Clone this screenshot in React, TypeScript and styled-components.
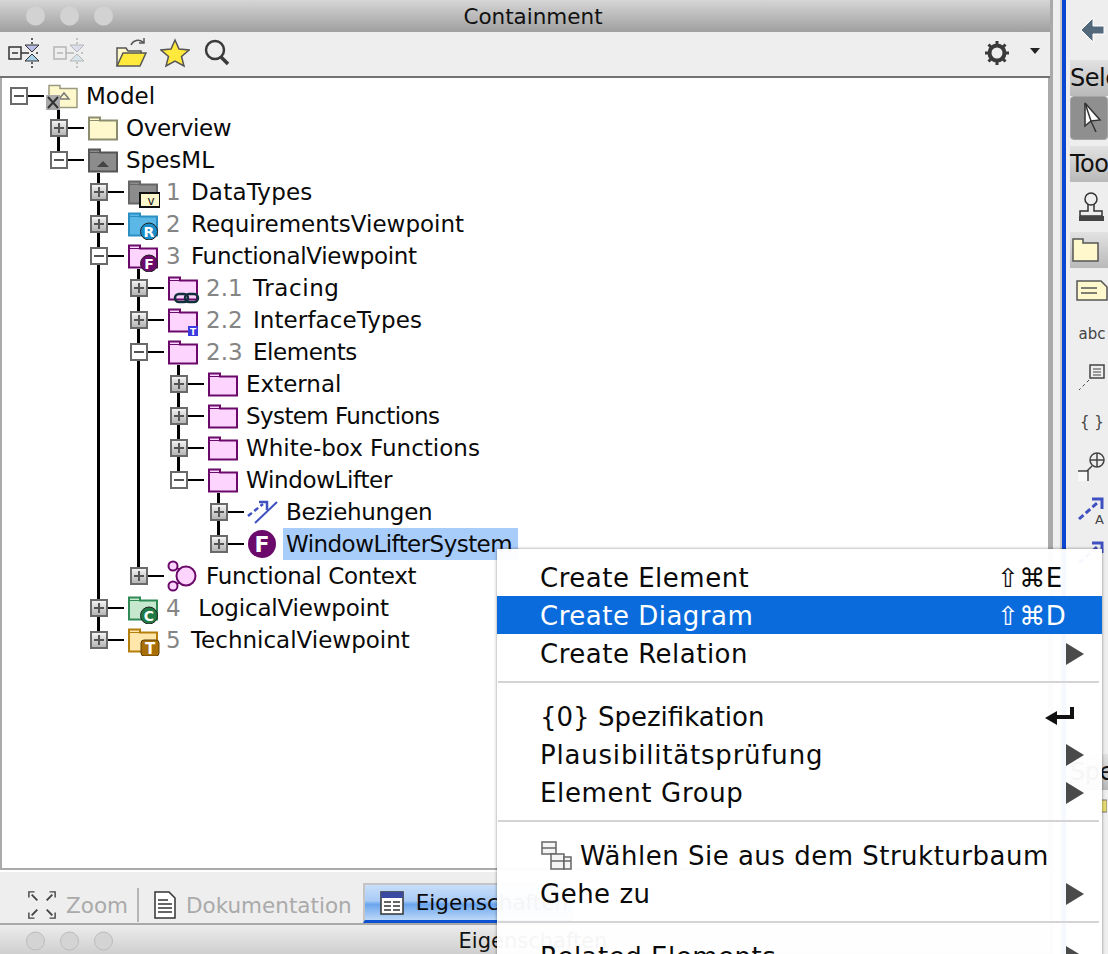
import React, { ReactNode } from 'react';
import styled, { createGlobalStyle } from 'styled-components';

const FONT = `"DejaVu Sans", "Liberation Sans", sans-serif`;

const GlobalStyle = createGlobalStyle`
  html, body {
    margin: 0;
    padding: 0;
    background: #eee;
    overflow: hidden;
  }
  body {
    font-family: ${FONT};
  }
`;

/* ---------- icons ---------- */

type FolderProps = { fill: string; stroke: string; children?: ReactNode };

function Folder({ fill, stroke, children }: FolderProps) {
  return (
    <svg width="36" height="32" viewBox="0 0 36 32">
      <path d="M5 5.5h11v3h17v19H5z" fill={fill} stroke={stroke} strokeWidth="2" />
      <path d="M5 8.5h11" stroke={stroke} strokeWidth="1" />
      {children}
    </svg>
  );
}

const purple = { fill: '#fdd4fd', stroke: '#6b0a6b' };

function Badge({ color, letter }: { color: string; letter: string }) {
  return (
    <>
      <circle cx="25" cy="23.5" r="8.5" fill={color} stroke="#222" strokeWidth="1" />
      <text x="25" y="28.5" textAnchor="middle" fontFamily={FONT} fontSize="14" fontWeight="700" fill="#fff">
        {letter}
      </text>
    </>
  );
}

const icons: Record<string, ReactNode> = {
  model: (
    <svg width="36" height="32" viewBox="0 0 36 32">
      <path d="M5 5.5h11v3h17v19H5z" fill="#fff8cc" stroke="#9a9a80" strokeWidth="1.5" />
      <path d="M15 19l5-6 5 6z" fill="none" stroke="#777" strokeWidth="1.5" />
      <rect x="2" y="15" width="14" height="15" fill="#aaa" />
      <path d="M4 17l10 11M14 17L4 28" stroke="#333" strokeWidth="2" />
    </svg>
  ),
  overview: <Folder fill="#fff8cc" stroke="#8c8c70" />,
  spesml: (
    <Folder fill="#8c8c8c" stroke="#555">
      <path d="M13 23l6-6 6 6z" fill="#444" />
    </Folder>
  ),
  datatypes: (
    <Folder fill="#8c8c8c" stroke="#666">
      <rect x="16" y="17" width="20" height="14" fill="#fff8cc" stroke="#111" strokeWidth="2" />
      <text x="27" y="29" textAnchor="middle" fontFamily={FONT} fontSize="12" fill="#111">v</text>
    </Folder>
  ),
  requirements: (
    <Folder fill="#5ab7e6" stroke="#2b8fc4">
      <Badge color="#1a8cc8" letter="R" />
    </Folder>
  ),
  functional: (
    <Folder {...purple}>
      <Badge color="#6b0a6b" letter="F" />
    </Folder>
  ),
  tracing: (
    <Folder {...purple}>
      <rect x="11" y="22" width="13" height="8" rx="4" fill="none" stroke="#12303c" strokeWidth="2.5" />
      <rect x="21" y="22" width="13" height="8" rx="4" fill="none" stroke="#12303c" strokeWidth="2.5" />
    </Folder>
  ),
  interfaces: (
    <Folder {...purple}>
      <rect x="24" y="22" width="10" height="10" fill="#3a3ae0" />
      <text x="29" y="31" textAnchor="middle" fontFamily={FONT} fontSize="9" fontWeight="700" fill="#fff">T</text>
    </Folder>
  ),
  purple: <Folder {...purple} />,
  relations: (
    <svg width="36" height="32" viewBox="0 0 36 32">
      <path d="M4 20L19 8" stroke="#3f51c0" strokeWidth="2.5" strokeDasharray="5 3" />
      <path d="M15 6h8v8" fill="none" stroke="#3f51c0" strokeWidth="2.5" />
      <path d="M11 27L33 6" stroke="#3f51c0" strokeWidth="2" />
    </svg>
  ),
  system: (
    <svg width="36" height="32" viewBox="0 0 36 32">
      <circle cx="18" cy="16" r="14" fill="#6b0a6b" />
      <text x="18" y="24" textAnchor="middle" fontFamily={FONT} fontSize="22" fontWeight="700" fill="#fff">F</text>
    </svg>
  ),
  context: (
    <svg width="36" height="32" viewBox="0 0 36 32">
      <circle cx="22" cy="16" r="9.5" fill="#fdd4fd" stroke="#6b0a6b" strokeWidth="2" />
      <circle cx="9" cy="6" r="4.5" fill="#fdd4fd" stroke="#6b0a6b" strokeWidth="2" />
      <circle cx="9" cy="26" r="4.5" fill="#fdd4fd" stroke="#6b0a6b" strokeWidth="2" />
      <path d="M13 8l3 2M13 24l3-2" stroke="#6b0a6b" strokeWidth="2" />
    </svg>
  ),
  logical: (
    <Folder fill="#c6e8cf" stroke="#2f8a56">
      <Badge color="#1f7a45" letter="C" />
    </Folder>
  ),
  technical: (
    <Folder fill="#ffe7ab" stroke="#b57f0c">
      <rect x="17" y="16" width="18" height="16" rx="3" fill="#a86f06" stroke="#5f4004" />
      <text x="26" y="30" textAnchor="middle" fontFamily={FONT} fontSize="15" fontWeight="700" fill="#fff">T</text>
    </Folder>
  ),
};

/* ---------- tree data ---------- */

type Row = {
  level: number;
  guides?: number[];
  toggle: 'plus' | 'minus';
  line?: 'up' | 'through';
  open?: boolean;
  icon: string;
  num?: string;
  label: string;
  track?: number;
  selected?: boolean;
};

const rows: Row[] = [
  { level: 0, toggle: 'minus', open: true, icon: 'model', label: 'Model' },
  { level: 1, toggle: 'plus', line: 'through', icon: 'overview', label: 'Overview', track: -0.4 },
  { level: 1, toggle: 'minus', line: 'up', open: true, icon: 'spesml', label: 'SpesML' },
  { level: 2, toggle: 'plus', line: 'through', icon: 'datatypes', num: '1 ', label: 'DataTypes', track: 0.2 },
  { level: 2, toggle: 'plus', line: 'through', icon: 'requirements', num: '2 ', label: 'RequirementsViewpoint' },
  { level: 2, toggle: 'minus', line: 'through', open: true, icon: 'functional', num: '3 ', label: 'FunctionalViewpoint', track: -0.3 },
  { level: 3, guides: [2], toggle: 'plus', line: 'through', icon: 'tracing', num: '2.1 ', label: 'Tracing', track: 0.6 },
  { level: 3, guides: [2], toggle: 'plus', line: 'through', icon: 'interfaces', num: '2.2 ', label: 'InterfaceTypes', track: 0.1 },
  { level: 3, guides: [2], toggle: 'minus', line: 'through', open: true, icon: 'purple', num: '2.3 ', label: 'Elements', track: -0.4 },
  { level: 4, guides: [2, 3], toggle: 'plus', line: 'through', icon: 'purple', label: 'External' },
  { level: 4, guides: [2, 3], toggle: 'plus', line: 'through', icon: 'purple', label: 'System Functions', track: -0.6 },
  { level: 4, guides: [2, 3], toggle: 'plus', line: 'through', icon: 'purple', label: 'White-box Functions' },
  { level: 4, guides: [2, 3], toggle: 'minus', line: 'up', open: true, icon: 'purple', label: 'WindowLifter', track: -0.35 },
  { level: 5, guides: [2, 3], toggle: 'plus', line: 'through', icon: 'relations', label: 'Beziehungen', track: -0.3 },
  { level: 5, guides: [2, 3], toggle: 'plus', line: 'up', icon: 'system', label: 'WindowLifterSystem', track: -0.55, selected: true },
  { level: 3, guides: [2], toggle: 'plus', line: 'up', icon: 'context', label: 'Functional Context', track: -0.3 },
  { level: 2, toggle: 'plus', line: 'through', icon: 'logical', num: '4  ', label: 'LogicalViewpoint', track: -0.2 },
  { level: 2, toggle: 'plus', line: 'up', icon: 'technical', num: '5 ', label: 'TechnicalViewpoint' },
];

function TreeRow({ row }: { row: Row }) {
  const cells = [];
  for (let i = 0; i < row.level; i++) {
    cells.push(<Guide key={i} $on={!!row.guides && row.guides.includes(i)} />);
  }
  return (
    <RowWrap>
      {cells}
      <Toggle $line={row.line}>
        <ToggleBox $closed={row.toggle === 'plus'}>{row.toggle === 'plus' ? <PlusBar /> : null}</ToggleBox>
      </Toggle>
      <IconCell $open={row.open}>{icons[row.icon]}</IconCell>
      <Label $selected={row.selected}>
        {row.num ? <Num>{row.num}</Num> : null}
        <LabelText $track={row.track}>{row.label}</LabelText>
      </Label>
    </RowWrap>
  );
}

/* ---------- menu icons ---------- */

const Arrow = () => (
  <svg width="18" height="22" viewBox="0 0 18 22">
    <path d="M0 0l18 11L0 22z" fill="#4a4a4a" />
  </svg>
);

const ReturnKey = () => (
  <svg width="32" height="24" viewBox="0 0 32 24">
    <path d="M28 2v10H12" fill="none" stroke="#111" strokeWidth="4" />
    <path d="M1 13l12-7v14z" fill="#111" />
  </svg>
);

const TreeGlyph = () => (
  <svg width="32" height="32" viewBox="0 0 32 32">
    <g fill="#f4f4f4" stroke="#666" strokeWidth="1.5">
      <rect x="2" y="2" width="14" height="12" />
      <rect x="11" y="14" width="13" height="15" />
      <rect x="24" y="17" width="7" height="12" />
    </g>
    <path d="M2 8h14M11 21h20" stroke="#666" strokeWidth="1.5" />
  </svg>
);

/* ---------- toolbar icons ---------- */

const CollapseIcon = ({ dim }: { dim?: boolean }) => (
  <svg width="32" height="32" viewBox="0 0 32 32" opacity={dim ? 0.3 : 1}>
    <rect x="1" y="10" width="12" height="12" fill="#eee" stroke="#333" strokeWidth="1.5" />
    <path d="M4 16h6M13 16h8M28 16h2" stroke="#333" strokeWidth="1.5" />
    <path d="M17 8h14l-7 7z" fill="#b8bde8" stroke="#333" />
    <path d="M17 24h14l-7-7z" fill="#a8d0e8" stroke="#333" />
    <path d="M24 1v6M24 25v6" stroke="#333" strokeWidth="1.5" strokeDasharray="2 2" />
  </svg>
);

const OpenFolderIcon = () => (
  <svg width="32" height="32" viewBox="0 0 32 32">
    <path d="M2 29V11h9l2 3h13v3" fill="#fff8cc" stroke="#555" strokeWidth="1.5" />
    <path d="M2 29l6-13h23l-6 13z" fill="#ffe93c" stroke="#555" strokeWidth="1.5" />
    <path d="M16 8c2-5 8-6 12-3M29 1v5h-5" fill="none" stroke="#555" strokeWidth="1.5" />
  </svg>
);

const StarIcon = () => (
  <svg width="30" height="30" viewBox="0 0 30 30">
    <path d="M15 2l4 9 10 1-7.5 6.5L24 28l-9-5-9 5 2.5-9.5L1 12l10-1z" fill="#ffe93c" stroke="#555" strokeWidth="1.5" />
  </svg>
);

const SearchIcon = () => (
  <svg width="28" height="28" viewBox="0 0 28 28">
    <circle cx="12" cy="11" r="9" fill="none" stroke="#3a3a3a" strokeWidth="2.5" />
    <path d="M18 18l7 7" stroke="#3a3a3a" strokeWidth="3.5" />
  </svg>
);

const GearIcon = () => (
  <svg width="26" height="26" viewBox="0 0 26 26">
    <circle cx="13" cy="13" r="7.5" fill="none" stroke="#3a3a3a" strokeWidth="4" />
    <path d="M13 1v5M13 20v5M1 13h5M20 13h5M4.500 4.500l3.500 3.500M18 18l3.500 3.500M21.500 4.500L18 8M8 18l-3.500 3.500" stroke="#3a3a3a" strokeWidth="3" />
  </svg>
);

export default function App() {
  return (
    <>
      <GlobalStyle />
      <Screen>
        <MainWindow>
          <TitleBar>
            <Lights>
              <Light />
              <Light />
              <Light />
            </Lights>
            <TitleText>Containment</TitleText>
          </TitleBar>
          <Toolbar>
            <ToolGroup>
              <CollapseIcon />
              <CollapseIcon dim />
            </ToolGroup>
            <ToolGroup $left={30}>
              <OpenFolderIcon />
              <StarIcon />
              <SearchIcon />
            </ToolGroup>
            <ToolEnd>
              <GearIcon />
              <Caret />
            </ToolEnd>
          </Toolbar>
          <Tree>
            {rows.map((row) => (
              <TreeRow key={row.label} row={row} />
            ))}
          </Tree>
          <TabStrip>
            <Tab>
              <svg width="30" height="30" viewBox="0 0 32 32">
                <path d="M2 8V2h6M30 8V2h-6M2 24v6h6M30 24v6h-6" fill="none" stroke="#444" strokeWidth="1.5" />
                <path d="M5 5l6 6M27 5l-6 6M5 27l6-6M27 27l-6-6" stroke="#444" strokeWidth="2" />
              </svg>
              <TabLabel>Zoom</TabLabel>
            </Tab>
            <TabDivider />
            <Tab>
              <svg width="24" height="28" viewBox="0 0 24 28">
                <path d="M2 1h14l6 6v20H2z" fill="#fff" stroke="#333" strokeWidth="1.5" />
                <path d="M5 9h10M5 13h14M5 17h14M5 21h14" stroke="#333" strokeWidth="1.5" />
              </svg>
              <TabLabel>Dokumentation</TabLabel>
            </Tab>
            <ActiveTab>
              <svg width="24" height="24" viewBox="0 0 24 24">
                <rect x="1" y="1" width="22" height="22" fill="#fff" stroke="#333" strokeWidth="1.5" />
                <rect x="1" y="1" width="22" height="6" fill="#3a4aa0" />
                <path d="M4 11h7M13 11h7M4 15h7M13 15h7M4 19h7M13 19h7" stroke="#333" strokeWidth="1.5" />
              </svg>
              <ActiveLabel>Eigenschaften</ActiveLabel>
            </ActiveTab>
          </TabStrip>
          <BottomBar>
            <BottomLights>
              <BottomLight />
              <BottomLight />
              <BottomLight />
            </BottomLights>
            <BottomTitle>Eigenschaften</BottomTitle>
          </BottomBar>
        </MainWindow>
        <Sash />
        <Palette>
          <BackRow>
            <svg width="26" height="28" viewBox="0 0 26 28">
              <path d="M14 2L2 14l12 12v-8h11v-8H14z" fill="#52697c" stroke="#fff" strokeWidth="1" />
            </svg>
          </BackRow>
          <PaletteHead>Selection</PaletteHead>
          <CursorButton>
            <svg width="22" height="32" viewBox="0 0 22 32">
              <path d="M2 1v23l6-5 5 11" fill="#fff" stroke="#333" strokeWidth="1.5" />
              <path d="M2 1l15 17-9 1z" fill="#fff" stroke="#333" strokeWidth="1.5" />
            </svg>
          </CursorButton>
          <PaletteHead $top={6}>Tools</PaletteHead>
          <PaletteItem $height={50}>
            <svg width="30" height="32" viewBox="0 0 30 32">
              <circle cx="14" cy="8" r="6" fill="none" stroke="#333" strokeWidth="1.5" />
              <path d="M11 13v7H3v5h22v-5h-8v-7" fill="none" stroke="#333" strokeWidth="1.5" />
              <rect x="2" y="25" width="25" height="5" fill="#444" />
            </svg>
          </PaletteItem>
          <PaletteHead>
            <svg width="30" height="26" viewBox="0 0 30 26">
              <path d="M3 2h10v4h15v18H3z" fill="#fff8cc" stroke="#555" strokeWidth="1.5" />
            </svg>
          </PaletteHead>
          <PaletteItem $height={44}>
            <svg width="32" height="22" viewBox="0 0 32 22">
              <path d="M1 2h24l6 6v13H1z" fill="#fff8cc" stroke="#555" strokeWidth="1.5" />
              <path d="M5 9h16M5 14h16" stroke="#555" strokeWidth="1.5" />
            </svg>
          </PaletteItem>
          <PaletteItem $height={44}>abc</PaletteItem>
          <PaletteItem $height={44}>
            <svg width="30" height="30" viewBox="0 0 30 30">
              <rect x="13" y="2" width="14" height="13" fill="none" stroke="#444" strokeWidth="1.5" />
              <path d="M16 6h8M16 9h8M16 12h8" stroke="#444" />
              <path d="M12 17L2 27" stroke="#444" strokeDasharray="3 3" />
            </svg>
          </PaletteItem>
          <PaletteItem $height={44}>{'{ }'}</PaletteItem>
          <PaletteItem $height={44}>
            <svg width="30" height="32" viewBox="0 0 30 32">
              <circle cx="20" cy="10" r="7" fill="none" stroke="#444" strokeWidth="1.5" />
              <path d="M13 10h14M20 3v14M15 16l-6 6" stroke="#444" strokeWidth="1.5" />
              <rect x="1" y="21" width="10" height="10" fill="#f8f8f8" />
              <path d="M1 21h10v10" fill="none" stroke="#444" strokeWidth="1.5" />
            </svg>
          </PaletteItem>
          <PaletteItem $height={44}>
            <svg width="30" height="30" viewBox="0 0 30 30">
              <path d="M2 24L20 8" stroke="#3f51c0" strokeWidth="3" strokeDasharray="6 3" />
              <path d="M15 4h10v10" fill="none" stroke="#3f51c0" strokeWidth="3" />
              <text x="18" y="29" fontFamily={FONT} fontSize="13" fill="#444">A</text>
            </svg>
          </PaletteItem>
          <PaletteItem $height={44}>
            <svg width="30" height="30" viewBox="0 0 30 30">
              <path d="M2 24L20 8" stroke="#3f51c0" strokeWidth="3" strokeDasharray="6 3" />
              <path d="M15 4h10v10" fill="none" stroke="#3f51c0" strokeWidth="3" />
            </svg>
          </PaletteItem>
          <PaletteItem $height={178} />
          <PaletteHead>Spezifikation</PaletteHead>
          <PaletteItem $height={40}>
            <svg width="30" height="24" viewBox="0 0 30 24">
              <rect x="22" y="2" width="8" height="12" fill="#e6dc70" stroke="#777" />
            </svg>
          </PaletteItem>
        </Palette>

        <Menu>
          <MenuItem>
            Create Element<Shortcut>⇧⌘E</Shortcut>
          </MenuItem>
          <MenuItem $active>
            Create Diagram<Shortcut>⇧⌘D</Shortcut>
          </MenuItem>
          <MenuItem>
            Create Relation
            <MenuEnd><Arrow /></MenuEnd>
          </MenuItem>
          <MenuSeparator />
          <MenuItem $track={0}>
            {'{0} Spezifikation'}
            <ReturnEnd><ReturnKey /></ReturnEnd>
          </MenuItem>
          <MenuItem $track={0.8}>
            Plausibilitätsprüfung
            <MenuEnd><Arrow /></MenuEnd>
          </MenuItem>
          <MenuItem $track={0.65}>
            Element Group
            <MenuEnd><Arrow /></MenuEnd>
          </MenuItem>
          <MenuSeparator />
          <MenuItem>
            <TreeGlyph />
            <MenuItemText>Wählen Sie aus dem Strukturbaum</MenuItemText>
          </MenuItem>
          <MenuItem>
            Gehe zu
            <MenuEnd><Arrow /></MenuEnd>
          </MenuItem>
          <MenuSeparator />
          <MenuItem>
            Related Elements
            <MenuEnd><Arrow /></MenuEnd>
          </MenuItem>
        </Menu>
      </Screen>
    </>
  );
}

/* ---------- layout ---------- */

const Screen = styled.div`
  position: relative;
  display: flex;
  width: 1108px;
  height: 954px;
  overflow: hidden;
  background: #eee;
`;

const MainWindow = styled.div`
  display: flex;
  flex-direction: column;
  flex: none;
  width: 1050px;
  height: 954px;
`;

const TitleBar = styled.div`
  display: flex;
  align-items: center;
  justify-content: center;
  position: relative;
  flex: none;
  height: 32px;
  background: linear-gradient(#d6d6d6, #9f9f9f);
`;

const Lights = styled.div`
  position: absolute;
  left: 26px;
  top: 50%;
  transform: translateY(-50%);
  display: flex;
  gap: 15px;
`;

const BottomLights = styled(Lights)`
  top: 56%;
`;

const Light = styled.span`
  width: 19px;
  height: 19px;
  border-radius: 50%;
  background: #d2d2d2;
`;

const TitleText = styled.div`
  margin-left: 16px;
  font-size: 21.5px;
  color: #111;
`;

const Toolbar = styled.div`
  display: flex;
  align-items: center;
  flex: none;
  height: 46px;
  padding: 0 8px 2px;
  box-sizing: border-box;
  background: #eee;
  border-bottom: 2px solid #727272;
`;

const ToolGroup = styled.div<{ $left?: number }>`
  display: flex;
  align-items: center;
  gap: 13px;
  margin-left: ${(p) => p.$left ?? 0}px;
`;

const ToolEnd = styled.div`
  display: flex;
  align-items: center;
  gap: 20px;
  margin-left: auto;
  margin-right: 2px;
`;

const Caret = styled.span`
  width: 0;
  height: 0;
  margin-bottom: 4px;
  border: 5px solid transparent;
  border-top: 6px solid #222;
  border-bottom: none;
`;

const Tree = styled.div`
  flex: 1;
  min-height: 0;
  padding-top: 2px;
  background: #fff;
  border-left: 2px solid #aaa;
  border-right: 2px solid #aaa;
  border-bottom: 2px solid #aaa;
`;

const RowWrap = styled.div`
  display: flex;
  align-items: stretch;
  height: 32px;
  margin-left: -2px;
`;

const Guide = styled.div<{ $on: boolean }>`
  flex: none;
  width: 40px;
  background: ${(p) =>
    p.$on ? 'linear-gradient(#000, #000) 17px 0 / 3px 100% no-repeat' : 'none'};
`;

const lineBg = (line?: 'up' | 'through') => {
  const stub = 'linear-gradient(#000, #000) 28px 15px / 16px 2px no-repeat';
  if (line === 'through') return `${stub}, linear-gradient(#000, #000) 17px 0 / 3px 100% no-repeat`;
  if (line === 'up') return `${stub}, linear-gradient(#000, #000) 17px 0 / 3px 50% no-repeat`;
  return stub;
};

const Toggle = styled.div<{ $line?: 'up' | 'through' }>`
  display: flex;
  align-items: center;
  flex: none;
  width: 44px;
  padding-left: 10px;
  box-sizing: border-box;
  background: ${(p) => lineBg(p.$line)};
`;

const ToggleBox = styled.div<{ $closed: boolean }>`
  position: relative;
  width: 18px;
  height: 18px;
  box-sizing: border-box;
  border: 2px solid #6a6a6a;
  background: ${(p) =>
    p.$closed ? 'linear-gradient(#f2f2f2, #b5b5b5)' : '#fff'};

  &::after {
    content: '';
    position: absolute;
    left: 2px;
    right: 2px;
    top: 6px;
    height: 2px;
    background: #555;
  }
`;

const PlusBar = styled.span`
  position: absolute;
  left: 6px;
  top: 2px;
  width: 2px;
  height: 10px;
  background: #555;
`;

const IconCell = styled.div<{ $open?: boolean }>`
  display: flex;
  align-items: center;
  flex: none;
  width: 42px;
  background: ${(p) =>
    p.$open ? 'linear-gradient(#000, #000) 13px 100% / 3px 3px no-repeat' : 'none'};
`;

const Label = styled.div<{ $selected?: boolean }>`
  display: flex;
  align-items: center;
  height: 32px;
  font-size: 23px;
  color: #0a0a0a;
  white-space: pre;
  ${(p) => (p.$selected ? 'background: #a8cdfb; margin-left: -3px; padding: 0 6px 0 3px;' : '')}
`;

const LabelText = styled.span<{ $track?: number }>`
  letter-spacing: ${(p) => p.$track ?? 0}px;
`;

const Num = styled.span`
  margin-right: 3px;
  color: #858585;
`;

const TabStrip = styled.div`
  display: flex;
  align-items: flex-end;
  flex: none;
  height: 55px;
  padding-left: 27px;
  box-sizing: border-box;
  background: #eee;
  border-top: 2px solid #fff;
  border-bottom: 2px solid #a8a8a8;
`;

const Tab = styled.div`
  display: flex;
  align-items: center;
  gap: 9px;
  height: 36px;
`;

const TabDivider = styled.span`
  width: 2px;
  height: 34px;
  margin: 0 14px 1px 9px;
  background: #b5b5b5;
`;

const TabLabel = styled.span`
  font-size: 21.5px;
  color: #aaa;
`;

const ActiveTab = styled.div`
  display: flex;
  align-items: center;
  gap: 12px;
  flex: none;
  height: 40px;
  width: 210px;
  margin-left: 11px;
  padding-left: 15px;
  box-sizing: border-box;
  border: 2px solid #c4c4c4;
  border-bottom: 3px solid #0a50d0;
  background: linear-gradient(#c9def9 0%, #a9cbf6 45%, #6ba5ed 55%, #bcd8f8 100%);

  svg {
    flex: none;
  }
`;

const ActiveLabel = styled.span`
  font-size: 21.5px;
  color: #0a0a0a;
`;

const BottomBar = styled.div`
  display: flex;
  align-items: center;
  justify-content: center;
  position: relative;
  flex: none;
  height: 29px;
  padding-top: 3px;
  box-sizing: border-box;
  background: linear-gradient(#ececec, #cfcfcf);
`;

const BottomLight = styled(Light)`
  background: #d4d4d4;
  border: 1px solid #bcbcbc;
  box-sizing: border-box;
`;

const BottomTitle = styled.div`
  font-size: 21px;
  color: #111;
  margin-left: 16px;
`;

const Sash = styled.div`
  flex: none;
  width: 12px;
  background: linear-gradient(90deg, #a9a9a9 0 3px, #efefef 3px 10px, #c8c8c8 10px);
`;

const Palette = styled.div`
  flex: 1;
  min-width: 0;
  padding-left: 4px;
  border-left: 4px solid #0a47d0;
  background: #eee;
  overflow: hidden;
`;

const BackRow = styled.div`
  display: flex;
  align-items: center;
  justify-content: flex-end;
  height: 60px;
  padding-right: 3px;
`;

const PaletteHead = styled.div<{ $top?: number }>`
  display: flex;
  align-items: center;
  height: 36px;
  margin-top: ${(p) => p.$top ?? 0}px;
  font-size: 24px;
  letter-spacing: -0.5px;
  color: #111;
  white-space: nowrap;
  background: linear-gradient(#e2e2e2, #b9b9b9);
`;

const CursorButton = styled.div`
  display: flex;
  align-items: center;
  height: 44px;
  padding-left: 12px;
  border-radius: 4px;
  background: #8f8f8f;
  border: 1px solid #a5a5a5;
  box-sizing: border-box;
`;

const PaletteItem = styled.div<{ $height: number }>`
  display: flex;
  align-items: center;
  justify-content: center;
  height: ${(p) => p.$height}px;
  padding-left: 6px;
  font-size: 15px;
  color: #444;
`;

const Menu = styled.div`
  position: absolute;
  left: 497px;
  top: 549px;
  width: 605px;
  height: 420px;
  padding-top: 9px;
  box-sizing: border-box;
  background: rgba(255, 255, 255, 0.96);
  box-shadow: 0 0 3px rgba(0, 0, 0, 0.45);
`;

const MenuItem = styled.div<{ $active?: boolean; $track?: number }>`
  display: flex;
  align-items: center;
  height: 38px;
  padding: 2px 0 0 43px;
  box-sizing: border-box;
  font-size: 26px;
  letter-spacing: ${(p) => p.$track ?? 0.5}px;
  white-space: pre;
  color: ${(p) => (p.$active ? '#fff' : '#0a0a0a')};
  background: ${(p) => (p.$active ? '#0a6cdc' : 'transparent')};
`;

const MenuItemText = styled.span`
  margin-left: 8px;
`;

const Shortcut = styled.span`
  margin-left: auto;
  width: 105px;
`;

const MenuEnd = styled.span`
  display: flex;
  margin-left: auto;
  margin-right: 18px;
`;

const ReturnEnd = styled.span`
  display: flex;
  margin-left: auto;
  margin-right: 26px;
`;

const MenuSeparator = styled.div`
  height: 2px;
  margin: 9px 3px 14px 1px;
  background: #d4d4d4;
`;
